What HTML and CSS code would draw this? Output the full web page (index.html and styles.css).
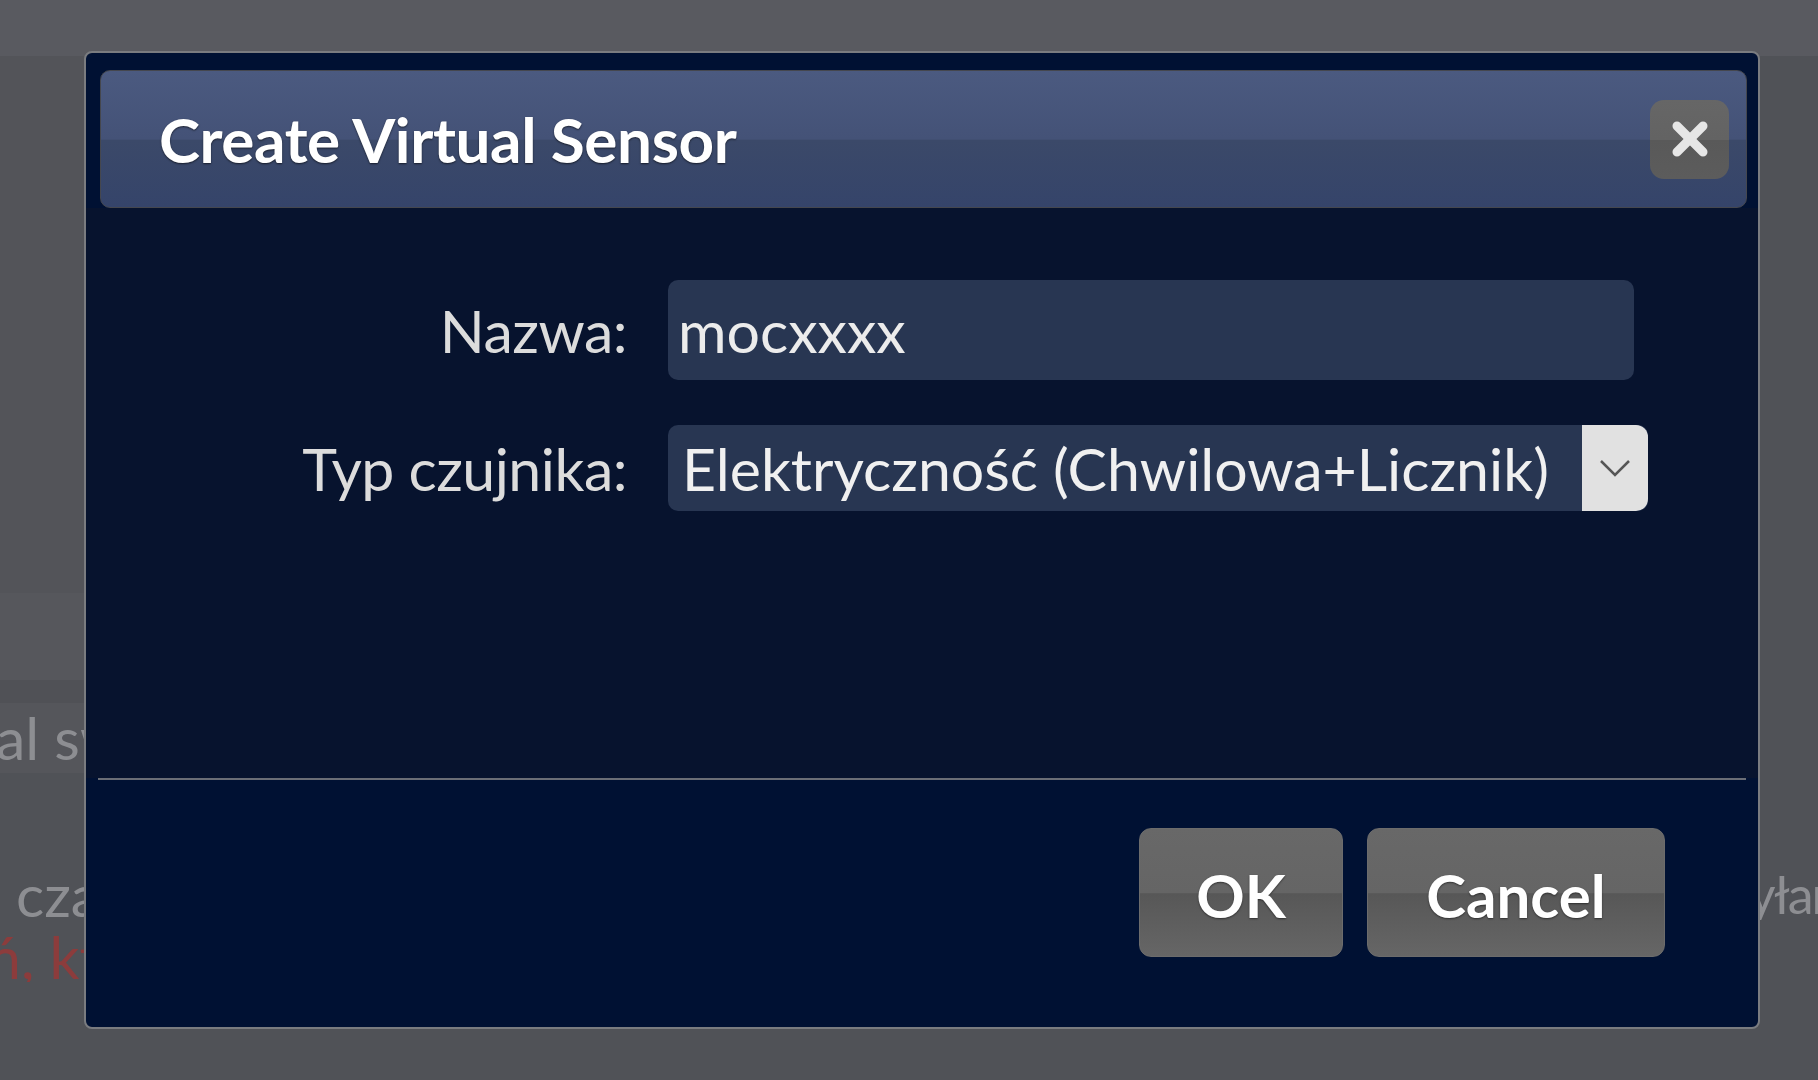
FILE: index.html
```html
<!DOCTYPE html>
<html>
<head>
    <title>Create Virtual Sensor</title>
    <link rel="stylesheet" href="styles.css">
</head>
<body>
    <!-- dimmed page behind the dialog -->
    <div class="page">
        <div class="topbar"></div>
        <div class="band band-a"></div>
        <div class="band band-b"></div>
        <div class="band band-c"></div>
        <div class="band band-d"><span class="bg-text cut">al switch</span></div>
        <div class="rest">
            <div class="bg-line">
                <span class="bg-text left-pad">czas</span>
                <span class="bg-text right-part">wyłania</span>
            </div>
            <div class="bg-line second">
                <span class="bg-text red cut-red">ń, które</span>
            </div>
        </div>
    </div>

    <!-- Create Virtual Sensor dialog -->
    <div class="dialog">
        <div class="titlebar">
            <span class="title">Create Virtual Sensor</span>
            <button class="close" type="button">
                <svg width="40" height="38" viewBox="0 0 40 38">
                    <line x1="7" y1="6" x2="33" y2="32" stroke="#e6e6e6" stroke-width="9" stroke-linecap="round"/>
                    <line x1="33" y1="6" x2="7" y2="32" stroke="#e6e6e6" stroke-width="9" stroke-linecap="round"/>
                </svg>
            </button>
        </div>

        <div class="content">
            <form class="form">
                <label class="label" for="sensorName">Nazwa:</label>
                <input class="field" type="text" id="sensorName" value="mocxxxx">

                <label class="label">Typ czujnika:</label>
                <div class="select">
                    <span class="select-text">Elektryczność (Chwilowa+Licznik)</span>
                    <span class="select-arrow">
                        <svg width="32" height="18" viewBox="0 0 32 18">
                            <polyline points="2,2 16,16 30,2" fill="none" stroke="#555" stroke-width="2.5"/>
                        </svg>
                    </span>
                </div>
            </form>
        </div>

        <div class="buttonpane">
            <button class="btn btn-ok" type="button">OK</button>
            <button class="btn btn-cancel" type="button">Cancel</button>
        </div>
    </div>
</body>
</html>
```

FILE: styles.css
```css
body {
    margin: 0;
    background: #505257;
    font-family: "Segoe UI", Lato, "Open Sans", sans-serif;
    overflow: hidden;
    height: 1080px;
}

/* page behind */
.page {
    width: 1818px;
}
.topbar {
    height: 56px;
    background: #595a60;
}
.band {
    width: 100px;
}
.band-a {
    height: 537px;
    background: #535459;
}
.band-b {
    height: 87px;
    background: #56575c;
}
.band-c {
    height: 23px;
    background: #505156;
}
.band-d {
    height: 70px;
    line-height: 70px;
    background: #55565b;
    overflow: hidden;
    white-space: nowrap;
}
.rest {
    padding-top: 96px;
}
.bg-line {
    display: flex;
    height: 51px;
    line-height: 51px;
    white-space: nowrap;
    overflow: hidden;
}
.bg-line.second {
    margin-top: 11px;
}
.bg-text {
    font-size: 59px;
    color: #8d8e92;
}
.bg-text.red {
    color: #8c3c3c;
}
.cut {
    margin-left: -4px;
}
.cut-red {
    margin-left: -12px;
}
.left-pad {
    padding-left: 16px;
}
.right-part {
    margin-left: auto;
    width: 108px;
    font-size: 52px;
    letter-spacing: -2px;
    overflow: hidden;
}

/* dialog */
.dialog {
    position: absolute;
    left: 84px;
    top: 51px;
    width: 1676px;
    height: 978px;
    box-sizing: border-box;
    border: 2px solid #7a7c80;
    border-radius: 8px;
    background: #001133;
    display: flex;
    flex-direction: column;
}

.titlebar {
    margin: 17px 11px 0 14px;
    height: 138px;
    box-sizing: border-box;
    border: 1px solid #45474e;
    border-radius: 10px;
    background: linear-gradient(#4b5a80 0%, #445277 50%, #3b4969 51%, #35446a 100%);
    display: flex;
    align-items: center;
    justify-content: space-between;
    padding: 0 17px 0 58px;
}
.title {
    color: #fff;
    font-size: 62px;
    font-weight: bold;
    letter-spacing: -0.4px;
    text-shadow: 0 1px 2px rgba(0, 0, 0, 0.6);
}
.close {
    width: 79px;
    height: 79px;
    border: none;
    border-radius: 14px;
    background: linear-gradient(#666 0%, #636363 50%, #595959 51%, #5c5c5c 100%);
    display: flex;
    align-items: center;
    justify-content: center;
    padding: 0;
}

.content {
    height: 570px;
    box-sizing: border-box;
    padding-top: 72px;
    background: #07132e;
}
.form {
    display: grid;
    grid-template-columns: 541px 980px;
    column-gap: 41px;
    row-gap: 45px;
    align-items: center;
    margin: 0;
}
.label {
    text-align: right;
    font-size: 59px;
    letter-spacing: -0.5px;
    color: #dcdcdc;
}
.field {
    width: 966px;
    height: 100px;
    box-sizing: border-box;
    border: none;
    border-radius: 10px;
    background: #283652;
    color: #ececec;
    font-family: inherit;
    font-size: 59px;
    padding: 0 10px;
    outline: none;
}
.select {
    height: 86px;
    display: flex;
    align-items: stretch;
    border-radius: 10px;
    background: #283652;
}
.select-text {
    flex: 1;
    display: flex;
    align-items: center;
    padding-left: 14px;
    font-size: 59px;
    color: #f0f0f0;
    white-space: nowrap;
}
.select-arrow {
    width: 66px;
    background: #e1e1e1;
    border-radius: 0 12px 12px 0;
    display: flex;
    align-items: center;
    justify-content: center;
}

.buttonpane {
    flex: 1;
    margin: 0 12px;
    border-top: 2px solid #6b6e76;
    padding: 48px 81px 0 0;
    display: flex;
    justify-content: flex-end;
    align-items: flex-start;
    gap: 24px;
}
.btn {
    height: 129px;
    padding: 4px 0 0;
    border: 1px solid #6c6c6c;
    border-radius: 12px;
    background: linear-gradient(#686868 0%, #656565 50%, #575757 51%, #666 100%);
    color: #fff;
    font-family: inherit;
    font-size: 60px;
    font-weight: bold;
    text-shadow: 0 1px 2px rgba(0, 0, 0, 0.5);
}
.btn-ok {
    width: 204px;
}
.btn-cancel {
    width: 298px;
}
```
